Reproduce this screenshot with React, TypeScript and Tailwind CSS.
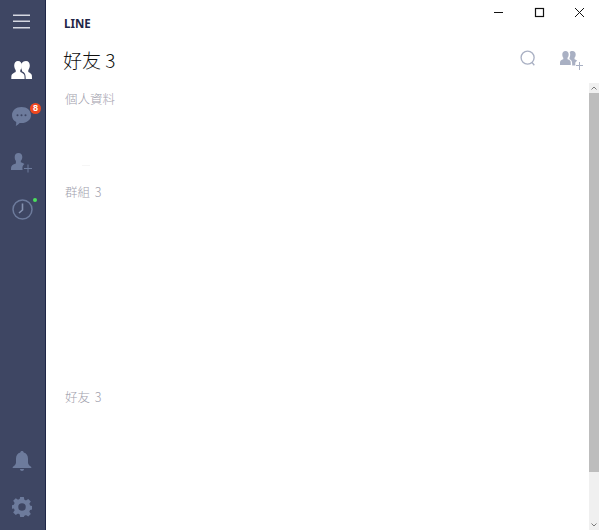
import React from 'react';

const cjk = { fontFamily: '"Noto Sans CJK TC", "Noto Sans", sans-serif' };

const SectionLabel: React.FC<{ text: string; className: string }> = ({ text, className }) => (
  <div className={`text-[12.5px] leading-[18px] text-[#9fa1ad] [word-spacing:2px] font-light ${className}`} style={cjk}>
    {text}
  </div>
);

const App: React.FC = () => {
  return (
    <div className="flex h-[530px] w-[599px] overflow-hidden bg-white">
      {/* Sidebar */}
      <div className="flex h-full w-[46px] shrink-0 flex-col items-center border-r border-[#1f2747] bg-[#3e4663] pr-[1px]">
        <svg width="18" height="16" viewBox="0 0 18 16" className="mt-[14px]" fill="#d5d8e2">
          <rect x="0" y="0.5" width="17" height="1.5" />
          <rect x="0" y="6.5" width="17" height="1.5" />
          <rect x="0" y="13" width="17" height="1.5" />
        </svg>

        {/* Friends */}
        <svg width="22" height="18" viewBox="0 2 22 16" preserveAspectRatio="none" className="mt-[31px]" fill="#ffffff">
          <path d="M7 2c2.400 0 3.800 1.800 3.800 4 0 1.700-.7 3.100-1.500 4v1.700c1.500.6 3.400 1.300 3.900 2.500.3.800.4 2 .4 3.800H.3c0-1.800 0-3 .4-3.800.6-1.200 2.600-1.900 4-2.500V10c-.8-.9-1.500-2.300-1.500-4 0-2.200 1.400-4 3.800-4z" />
          <path d="M15 2c2.400 0 3.800 1.800 3.800 4 0 1.700-.7 3.100-1.500 4v1.700c1.400.6 2.900 1.300 3.400 2.500.3.800.3 2 .3 3.800h-6.300c0-2.200-.2-3.500-.7-4.500-.6-1.100-1.800-1.800-3-2.300V10c-.8-.9-.9-2.300-.9-4 0-.5 0-1 .2-1.500C11.200 3 12.800 2 15 2z" />
        </svg>

        {/* Chats */}
        <div className="relative mt-[27px] h-[22px] w-[22px]">
          <svg width="21" height="21" viewBox="0 0 21 21" fill="#6d7b9c">
            <path d="M10.500 1C16 1 20 4.500 20 9.200c0 4.600-4.200 7.800-9.500 7.800-.7 0-1.200 0-1.800-.1-1.200 1.300-2.500 2.400-3.900 3.100.4-1.400.5-2.700.4-4C2.400 14.500 1 12.100 1 9.200 1 4.500 5 1 10.500 1z" />
            <circle cx="6.500" cy="9.200" r="1" fill="#3e4663" />
            <circle cx="10.500" cy="9.200" r="1" fill="#3e4663" />
            <circle cx="14.500" cy="9.200" r="1" fill="#3e4663" />
          </svg>
          <span className="absolute -right-[8px] -top-[3px] flex h-[11px] w-[11px] items-center justify-center rounded-full bg-[#f0481f] text-[9px] font-bold leading-none text-white" style={{ fontFamily: '"Liberation Sans", sans-serif' }}>
            8
          </span>
        </div>

        {/* Add friend */}
        <svg width="22" height="22" viewBox="0 0 22 22" className="mt-[25px]" fill="#6d7b9c">
          <path d="M7.500 0c2.300 0 3.800 1.700 3.800 3.900 0 1.600-.7 3-1.500 3.900v1.500c1.300.5 2.700 1.100 3.700 1.800-1.300.9-2.100 2.400-2.100 4.100 0 .6.100 1.200.3 1.800H0c0-1.400 0-2.900.5-3.800.7-1.300 2.700-1.900 4.400-2.600V7.800c-.8-.9-1.200-2.300-1.200-3.900C3.700 1.700 5.200 0 7.500 0z" />
          <rect x="13" y="15" width="8" height="1" />
          <rect x="16.500" y="11.500" width="1" height="8" />
        </svg>

        {/* Timeline */}
        <div className="relative mt-[24px] h-[21px] w-[21px]">
          <svg width="21" height="21" viewBox="0 0 21 21" fill="none" stroke="#6d7b9c" strokeWidth="1.500">
            <circle cx="10.500" cy="10.500" r="9.500" />
            <path d="M10.500 4.500v6.500l-3.500 3" strokeWidth="1.600" stroke="#8592b0" />
          </svg>
          <span className="absolute -right-[4px] -top-[1px] h-[4px] w-[4px] rounded-full bg-[#4be05c]" />
        </div>

        <div className="flex-1" />

        {/* Bell */}
        <svg width="20" height="21" viewBox="0 0 20 21" fill="#6d7b9c" className="mb-[25px]">
          <path d="M10 0c1 0 1.600.6 1.700 1.400C14.500 2.200 16 4.500 16 7.800v3.700c0 1.900 1.500 3.400 3.300 4.500v1H.7v-1C2.500 14.900 4 13.400 4 11.500V7.800c0-3.300 1.500-5.600 4.300-6.400C8.400.6 9 0 10 0z" />
          <path d="M8 18h4c0 1.200-.9 2-2 2s-2-.8-2-2z" />
        </svg>

        {/* Settings */}
        <svg width="20" height="20" viewBox="0 0 24 24" className="mb-[13px]" fill="#6d7b9c">
          <path fillRule="evenodd" d="M9.800 0h4.400l.6 3.200c.7.200 1.300.5 1.900.9l2.800-1.800 3.100 3.100-1.800 2.800c.4.600.7 1.200.9 1.900l2.300.6v4.400l-2.300.6c-.2.700-.5 1.300-.9 1.900l1.800 2.800-3.100 3.100-2.800-1.800c-.6.400-1.200.7-1.900.9L14.200 24H9.800l-.6-3.200c-.7-.2-1.300-.5-1.900-.9l-2.800 1.800-3.100-3.100 1.800-2.800c-.4-.6-.7-1.200-.9-1.900L0 14.200V9.800l2.300-.6c.2-.7.500-1.300.9-1.900L1.400 4.500l3.100-3.100 2.800 1.800c.6-.4 1.200-.7 1.900-.9L9.800 0zM12 7.500a4.500 4.500 0 1 0 0 9 4.500 4.500 0 0 0 0-9z" />
        </svg>
      </div>

      {/* Main */}
      <div className="flex min-w-0 flex-1 flex-col">
        {/* Title row with window controls */}
        <div className="flex h-[33px] shrink-0 justify-between">
          <div className="mt-[16px] pl-[18px] text-[11.5px] font-bold leading-[16px] text-[#1f2747]" style={{ fontFamily: '"Noto Sans", sans-serif' }}>
            LINE
          </div>
          <div className="flex items-start pr-[14px] pt-[7px]">
            <svg width="11" height="11" viewBox="0 0 11 11" stroke="#111111" fill="none" className="mr-[30px]">
              <path d="M1 5.500h9" />
            </svg>
            <svg width="11" height="11" viewBox="0 0 11 11" stroke="#111111" fill="none" className="mr-[29px]">
              <rect x="1.500" y="1.500" width="8" height="8" strokeWidth="1.200" />
            </svg>
            <svg width="11" height="11" viewBox="0 0 11 11" stroke="#111111" fill="none">
              <path d="M1 1l9 9M10 1l-9 9" />
            </svg>
          </div>
        </div>

        {/* Heading row */}
        <div className="flex h-[50px] shrink-0 items-start justify-between pr-[16px]">
          <div className="pl-[17px] pt-[12px] text-[19px] leading-[30px] text-[#111111] font-light" style={cjk}>
            好友 3
          </div>
          <div className="flex items-start pt-[17px]">
            <svg width="17" height="17" viewBox="0 0 19 19" fill="none" stroke="#a9b0c3" strokeWidth="1.500" className="mr-[23px]">
              <circle cx="8.500" cy="8.500" r="7.300" />
              <path d="M13.500 14l2.500 3" />
            </svg>
            <svg width="23" height="19" viewBox="0 0 23 19" fill="#a9b0c3" className="mt-[1px]">
              <path d="M5.500 0c2 0 3.200 1.500 3.200 3.400 0 1.400-.6 2.600-1.200 3.400v1.500c1.100.4 2.500 1 3 2 .3.600.3 1.700.3 3.700H0c0-2 0-3.100.3-3.700.5-1 1.900-1.600 3-2V6.800C2.700 6 2.300 4.800 2.300 3.400 2.300 1.500 3.500 0 5.500 0z" />
              <path d="M12.500 0c2 0 3.200 1.500 3.200 3.400 0 1.400-.6 2.600-1.200 3.400v1.500c1 .4 2.100.8 2.700 1.500-1 .4-1.700 1.300-1.900 2.200v2.500h-3.100c0-2.900-.2-4.100-.7-4.800-.6-.8-1.300-1.100-2-1.500V6.800c.4-.8.700-2 .7-3.400 0-.9-.2-1.700-.6-2.300C10.100.4 11.100 0 12.500 0z" />
              <rect x="16" y="14" width="7" height="1" />
              <rect x="19" y="11" width="1" height="8" />
            </svg>
          </div>
        </div>

        {/* List + scrollbar */}
        <div className="flex min-h-0 flex-1">
          <div className="flex-1 pl-[19px]">
            <SectionLabel text="個人資料" className="mt-[7px]" />
            <div className="ml-[17px] mt-[57px] h-px w-[8px] bg-[#f6f6f6]" />
            <SectionLabel text="群組 3" className="mt-[17px]" />
            <SectionLabel text="好友 3" className="mt-[187px]" />
          </div>
          <div className="flex w-[10px] shrink-0 flex-col bg-[#f0f0f0]">
            <div className="flex h-[10px] items-center justify-center">
              <svg width="6" height="4" viewBox="0 0 6 4" fill="none" stroke="#7a7a7a"><path d="M0.500 3.500L3 1l2.500 2.500" /></svg>
            </div>
            <div className="h-[379px] bg-[#bdbdbd]" />
            <div className="flex-1" />
            <div className="flex h-[10px] items-center justify-center">
              <svg width="6" height="4" viewBox="0 0 6 4" fill="none" stroke="#7a7a7a"><path d="M0.500 0.500L3 3l2.500-2.500" /></svg>
            </div>
          </div>
        </div>
      </div>
    </div>
  );
};

export default App;
